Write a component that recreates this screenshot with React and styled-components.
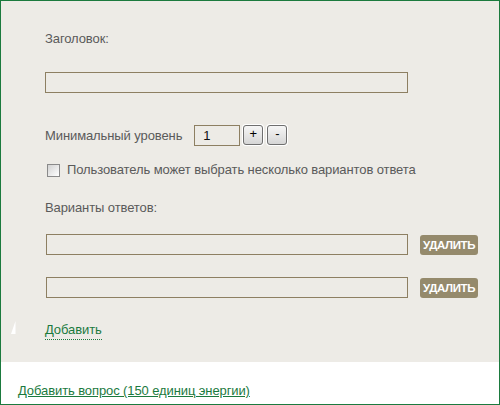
import React from "react";
import styled, { createGlobalStyle } from "styled-components";

const Global = createGlobalStyle`
  html, body { margin: 0; padding: 0; background: #ffffff; }
  body { font-family: Arial, "Liberation Sans", sans-serif; }
`;

const Frame = styled.div`
  width: 500px;
  height: 405px;
  box-sizing: border-box;
  border: 1px solid #1b7a3e;
  display: flex;
  flex-direction: column;
  background: #ffffff;
`;

const Editor = styled.div`
  position: relative;
  height: 361px;
  box-sizing: border-box;
  background: #edebe6;
  padding: 30px 0 0 44px;
  display: flex;
  flex-direction: column;
  align-items: flex-start;
`;

const Label = styled.div`
  font-size: 13px;
  line-height: 16px;
  letter-spacing: -0.1px;
  color: #5a5a5a;
  margin-top: ${(p) => p.$mt || 0}px;
`;

const TextInput = styled.input`
  box-sizing: border-box;
  width: ${(p) => p.$w}px;
  height: 21px;
  border: 1px solid #8d7f62;
  background: #edebe6;
  margin: ${(p) => p.$mt || 0}px 0 0 ${(p) => p.$ml || 0}px;
  padding: 0 8px;
  font-family: Arial, "Liberation Sans", sans-serif;
  font-size: 13px;
  color: #111;
  outline: none;
`;

const LevelRow = styled.div`
  display: flex;
  align-items: center;
  margin-top: 32px;
  height: 21px;
`;

const LevelInput = styled(TextInput)`
  margin-left: 12px;
  padding: 0 0 0 8px;
`;

const StepButton = styled.button`
  box-sizing: border-box;
  width: 20px;
  height: 20px;
  margin-left: ${(p) => p.$ml}px;
  align-self: flex-start;
  border: 1px solid #6f6f6f;
  border-radius: 3px;
  box-shadow: 0 0 0 1px #ffffff;
  background: linear-gradient(#f6f6f6, #d6d6d6);
  font-family: Arial, "Liberation Sans", sans-serif;
  font-size: 13px;
  line-height: 16px;
  color: #000;
  padding: 0 0 2px;
  display: flex;
  align-items: center;
  justify-content: center;
`;

const CheckRow = styled.label`
  display: flex;
  align-items: center;
  margin-top: 16px;
  margin-left: 2px;
`;

const CheckBox = styled.span`
  box-sizing: border-box;
  width: 13px;
  height: 13px;
  border: 1px solid #8a8a8a;
  background: linear-gradient(135deg, #d2d2d2, #ffffff);
  margin-right: 7px;
`;

const AnswerRow = styled.div`
  display: flex;
  align-items: center;
  margin-top: ${(p) => p.$mt}px;
`;

const DeleteButton = styled.button`
  box-sizing: border-box;
  height: 20px;
  width: 58px;
  margin-left: 12px;
  border: none;
  border-radius: 3px;
  background: #958a6c;
  color: #ffffff;
  font-family: Arial, "Liberation Sans", sans-serif;
  font-weight: bold;
  font-size: 11.5px;
  letter-spacing: -0.4px;
  padding: 0;
`;

const AddLink = styled.a`
  margin-top: 24px;
  font-size: 13px;
  line-height: 16px;
  letter-spacing: -0.1px;
  color: #1b7a3e;
  text-decoration: none;
  border-bottom: 1px dotted #1b7a3e;
  padding-bottom: 1px;
`;

const Pointer = styled.svg`
  position: absolute;
  left: 10px;
  top: 320px;
`;

const Footer = styled.div`
  flex: 1;
  padding: 19px 0 0 17px;
`;

const FooterLink = styled.a`
  font-size: 13px;
  line-height: 16px;
  letter-spacing: -0.1px;
  color: #1b7a3e;
  text-decoration: underline;
`;

export default function App() {
  return (
    <>
      <Global />
      <Frame>
        <Editor>
          <Label>Заголовок:</Label>
          <TextInput $w={363} $mt={25} />
          <LevelRow>
            <Label>Минимальный уровень</Label>
            <LevelInput $w={46} defaultValue="1" />
            <StepButton $ml={3}>+</StepButton>
            <StepButton $ml={4}>-</StepButton>
          </LevelRow>
          <CheckRow>
            <CheckBox />
            <Label>Пользователь может выбрать несколько вариантов ответа</Label>
          </CheckRow>
          <Label $mt={22}>Варианты ответов:</Label>
          <AnswerRow $mt={18}>
            <TextInput $w={362} $ml={1} />
            <DeleteButton>УДАЛИТЬ</DeleteButton>
          </AnswerRow>
          <AnswerRow $mt={22}>
            <TextInput $w={362} $ml={1} />
            <DeleteButton>УДАЛИТЬ</DeleteButton>
          </AnswerRow>
          <AddLink>Добавить</AddLink>
          <Pointer width="5" height="13" viewBox="0 0 5 13">
            <polygon points="4.5,0 4.5,13 0,13" fill="#ffffff" />
          </Pointer>
        </Editor>
        <Footer>
          <FooterLink>Добавить вопрос (150 единиц энергии)</FooterLink>
        </Footer>
      </Frame>
    </>
  );
}
